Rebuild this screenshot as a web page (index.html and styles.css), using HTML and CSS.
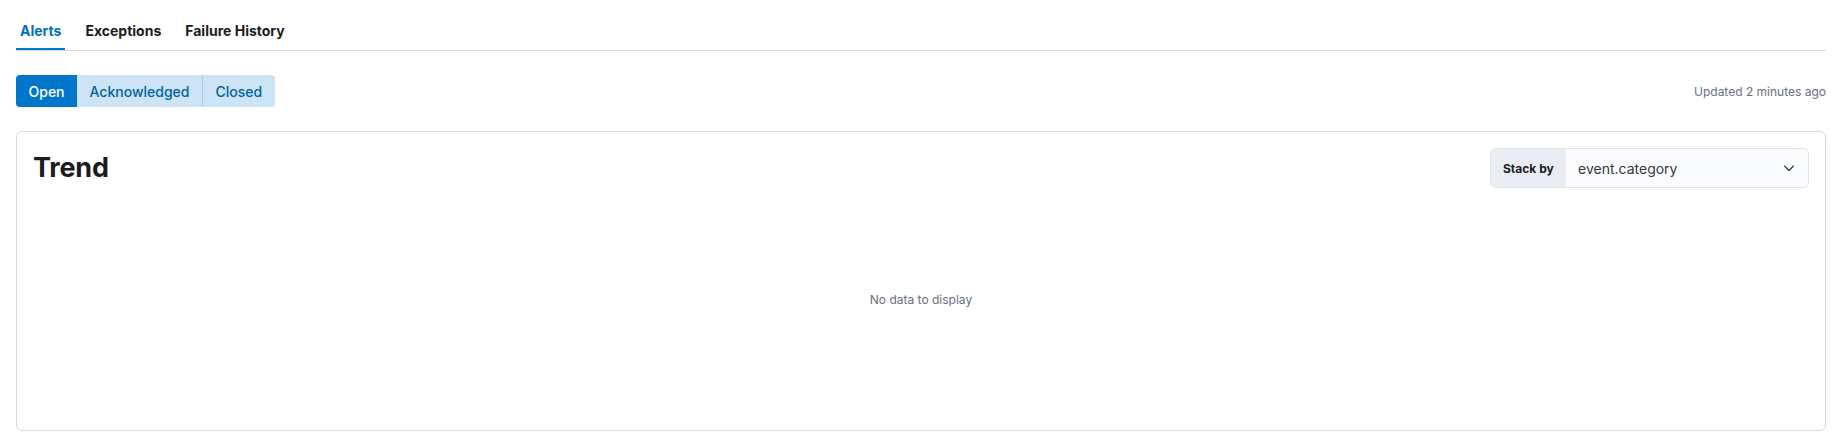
FILE: index.html
```html
<!DOCTYPE html>
<html lang="en">
<head>
<meta charset="utf-8">
<title>Alerts</title>
<link rel="stylesheet" href="styles.css">
</head>
<body>
<div class="page">
  <nav class="tabs">
    <div class="tab tab-active">Alerts</div>
    <div class="tab">Exceptions</div>
    <div class="tab">Failure History</div>
  </nav>
  <div class="toolbar">
    <div class="btn-group">
      <button class="bg-btn bg-btn-selected">Open</button>
      <button class="bg-btn">Acknowledged</button>
      <button class="bg-btn bg-btn-divided">Closed</button>
    </div>
    <div class="updated">Updated 2 minutes ago</div>
  </div>
  <section class="panel">
    <header class="panel-header">
      <h2 class="title">Trend</h2>
      <div class="select">
        <div class="select-prepend">Stack by</div>
        <div class="select-value">
          <span>event.category</span>
          <svg class="chevron" width="16" height="16" viewBox="0 0 16 16"><path d="M3.5 6 L8 10.5 L12.5 6" fill="none" stroke="#343741" stroke-width="1.1" stroke-linecap="round" stroke-linejoin="round"/></svg>
        </div>
      </div>
    </header>
    <div class="chart">
      <span class="nodata">No data to display</span>
    </div>
  </section>
</div>
</body>
</html>
```

FILE: styles.css
```css
* { box-sizing: border-box; }
html, body { margin: 0; padding: 0; background: #fff; }
body {
  font-family: Inter, "Noto Sans", "Liberation Sans", sans-serif;
  color: #343741;
  -webkit-font-smoothing: antialiased;
}
.page {
  padding: 10px 16px 0 16px;
}
.tabs {
  display: flex;
  gap: 16px;
  border-bottom: 1px solid #d3dae6;
  height: 41px;
}
.tab {
  height: 40px;
  padding: 0 4px;
  display: flex;
  align-items: center;
  font-size: 14px;
  font-weight: 700;
  color: #1a1c21;
}
.tab-active {
  color: #0071c2;
  box-shadow: inset 0 -2px 0 #0077cc;
}
.toolbar {
  margin-top: 24px;
  display: flex;
  align-items: center;
  justify-content: space-between;
}
.btn-group {
  display: flex;
  border-radius: 4px;
  overflow: hidden;
}
.bg-btn {
  height: 32px;
  padding: 0 12.5px;
  border: 0;
  margin: 0;
  font-family: inherit;
  font-size: 14px;
  font-weight: 500;
  background: #cce4f5;
  color: #0061a6;
}
.bg-btn-selected {
  background: #0077cc;
  color: #fff;
}
.bg-btn-divided {
  border-left: 1px solid #a6cdee;
}
.updated {
  font-size: 12px;
  color: #69707d;
}
.panel {
  margin-top: 24px;
  height: 300px;
  border: 1px solid #d3dae6;
  border-radius: 6px;
  padding: 16px;
  display: flex;
  flex-direction: column;
}
.panel-header {
  display: flex;
  align-items: center;
  justify-content: space-between;
  height: 40px;
}
.title {
  margin: 0;
  font-size: 27px;
  font-weight: 700;
  color: #1a1c21;
  line-height: 40px;
  letter-spacing: -0.2px;
}
.select {
  display: flex;
  width: 319px;
  height: 40px;
  border: 1px solid #dfe3ec;
  border-radius: 6px;
  overflow: hidden;
  background: #fbfcfd;
}
.select-prepend {
  width: 75px;
  display: flex;
  align-items: center;
  padding-left: 12px;
  background: #e9edf3;
  font-size: 12px;
  font-weight: 700;
  color: #1a1c21;
}
.select-value {
  flex: 1;
  display: flex;
  align-items: center;
  justify-content: space-between;
  padding: 0 11px 0 12px;
  font-size: 14px;
  color: #343741;
}
.chart {
  flex: 1;
  display: flex;
  align-items: center;
  justify-content: center;
  padding-bottom: 4px;
}
.nodata {
  font-size: 12px;
  color: #69707d;
}
```
